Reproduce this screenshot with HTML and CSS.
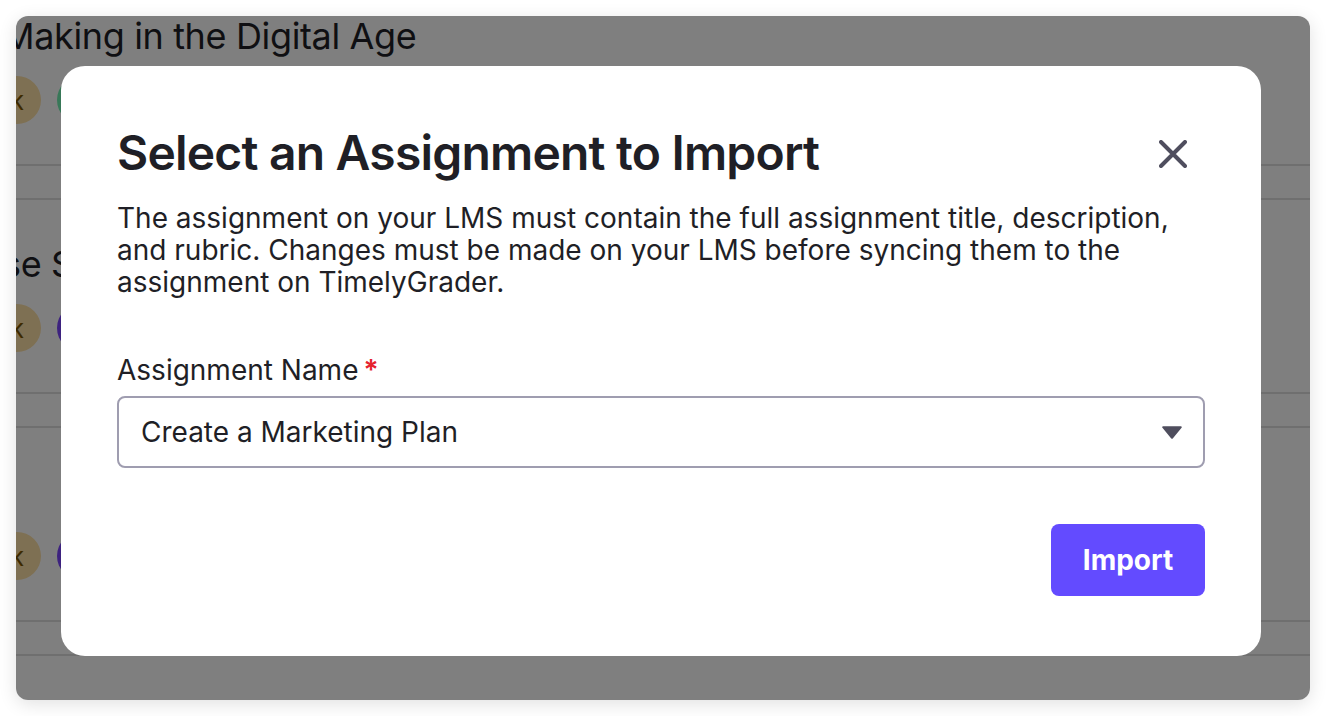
FILE: index.html
```html
<!DOCTYPE html>
<html lang="en">
<head>
<meta charset="utf-8">
<title>Select an Assignment to Import</title>
<link rel="stylesheet" href="styles.css">
</head>
<body>
<div class="window">
  <div class="page">
    <section class="course">
      <h2 class="course-title title-first">Making in the Digital Age</h2>
      <div class="avatars">
        <span class="avatar tan">K</span>
        <span class="avatar green">M</span>
      </div>
      <div class="course-foot"></div>
    </section>
    <section class="course">
      <h2 class="course-title title-second">se Strategy</h2>
      <div class="avatars">
        <span class="avatar tan">K</span>
        <span class="avatar purple">J</span>
      </div>
      <div class="course-foot"></div>
    </section>
    <section class="course">
      <div class="course-title"></div>
      <div class="avatars">
        <span class="avatar tan">K</span>
        <span class="avatar purple">J</span>
      </div>
      <div class="course-foot"></div>
    </section>
  </div>
  <div class="overlay">
    <div class="modal">
      <div class="modal-head">
        <h1 class="modal-title">Select an Assignment to Import</h1>
        <button class="close" aria-label="Close">
          <svg viewBox="0 0 28 28" width="28" height="28" fill="none" stroke="#4f4e5e" stroke-width="4" stroke-linecap="round"><path d="M2 2 26 26M26 2 2 26"/></svg>
        </button>
      </div>
      <p class="modal-text">The assignment on your LMS must contain the full assignment title, description, and rubric. Changes must be made on your LMS before syncing them to the assignment on TimelyGrader.</p>
      <label class="field-label">Assignment Name<span class="required">*</span></label>
      <div class="select">
        <span>Create a Marketing Plan</span>
        <svg viewBox="0 0 20 13" width="20" height="13"><path d="M1.2 1.2H18.8L10 11.8Z" fill="#4f4e5e" stroke="#4f4e5e" stroke-width="2" stroke-linejoin="round"/></svg>
      </div>
      <div class="actions">
        <button class="import">Import</button>
      </div>
    </div>
  </div>
</div>
</body>
</html>
```
FILE: styles.css
```css
* { box-sizing: border-box; }
html, body { height: 100%; }
body {
  margin: 0;
  padding: 16px;
  background: #fff;
  font-family: Inter, "Noto Sans", sans-serif;
  overflow: hidden;
}
.window {
  position: relative;
  width: 1294px;
  height: 684px;
  border-radius: 12px;
  overflow: hidden;
  background: #fff;
  color: #1f1f26;
  box-shadow: 0 4px 18px rgba(0, 0, 0, 0.12);
}
.page { margin-top: -44px; }
.course {
  height: 228px;
  display: flex;
  flex-direction: column;
}
.course-title {
  margin: 32px 0 0;
  height: 64px;
  font-size: 36px;
  font-weight: 400;
  line-height: 64px;
  letter-spacing: -0.36px;
  white-space: nowrap;
}
.title-first { margin-left: -14px; }
.title-second { margin-left: -14px; }
.avatars {
  display: flex;
  gap: 16px;
  margin-left: -23px;
  margin-top: 8px;
}
.avatar {
  width: 48px;
  height: 48px;
  padding-top: 5px;
  border-radius: 50%;
  display: flex;
  align-items: center;
  justify-content: center;
  font-size: 20px;
  font-weight: 500;
  color: #7a5500;
}
.tan { background: #fde0a6; }
.green { background: #70f0b0; }
.purple { background: #7a44ff; color: #fff; }
.course-foot {
  margin-top: auto;
  height: 36px;
  border-top: 2px solid #dedede;
  border-bottom: 2px solid #dedede;
}
.overlay {
  position: absolute;
  inset: 0;
  background: rgba(0, 0, 0, 0.5);
  display: flex;
  justify-content: center;
  padding: 50px 4px 0 0;
}
.modal {
  width: 1200px;
  height: 590px;
  background: #fff;
  border-radius: 24px;
  padding: 56px 56px 60px;
  display: flex;
  flex-direction: column;
}
.modal-head {
  display: flex;
  align-items: center;
  justify-content: space-between;
  height: 60px;
}
.modal-title {
  margin: 0;
  padding-top: 1px;
  font-size: 48px;
  font-weight: 600;
  line-height: 60px;
  letter-spacing: -0.8px;
  color: #1f1f26;
  white-space: nowrap;
}
.close {
  width: 28px;
  height: 28px;
  margin: 3px 18px 0 0;
  padding: 0;
  border: 0;
  background: none;
  display: block;
}
.close svg { display: block; }
.modal-text {
  margin: 20px 0 0;
  font-size: 28px;
  line-height: 32px;
  color: #1f1f26;
}
.field-label {
  display: block;
  margin-top: 56px;
  font-size: 28px;
  line-height: 32px;
  color: #1f1f26;
}
.required {
  color: #e5222e;
  font-weight: 600;
  margin-left: 5px;
}
.select {
  margin-top: 10px;
  height: 72px;
  border: 2px solid #9f9db0;
  border-radius: 8px;
  padding: 0 21px 0 22px;
  display: flex;
  align-items: center;
  justify-content: space-between;
  font-size: 28px;
  color: #1f1f26;
}
.actions {
  margin-top: auto;
  display: flex;
  justify-content: flex-end;
}
.import {
  width: 154px;
  height: 72px;
  border: 0;
  border-radius: 8px;
  background: #634bff;
  color: #fff;
  font-family: inherit;
  font-size: 28px;
  font-weight: 700;
}
```
